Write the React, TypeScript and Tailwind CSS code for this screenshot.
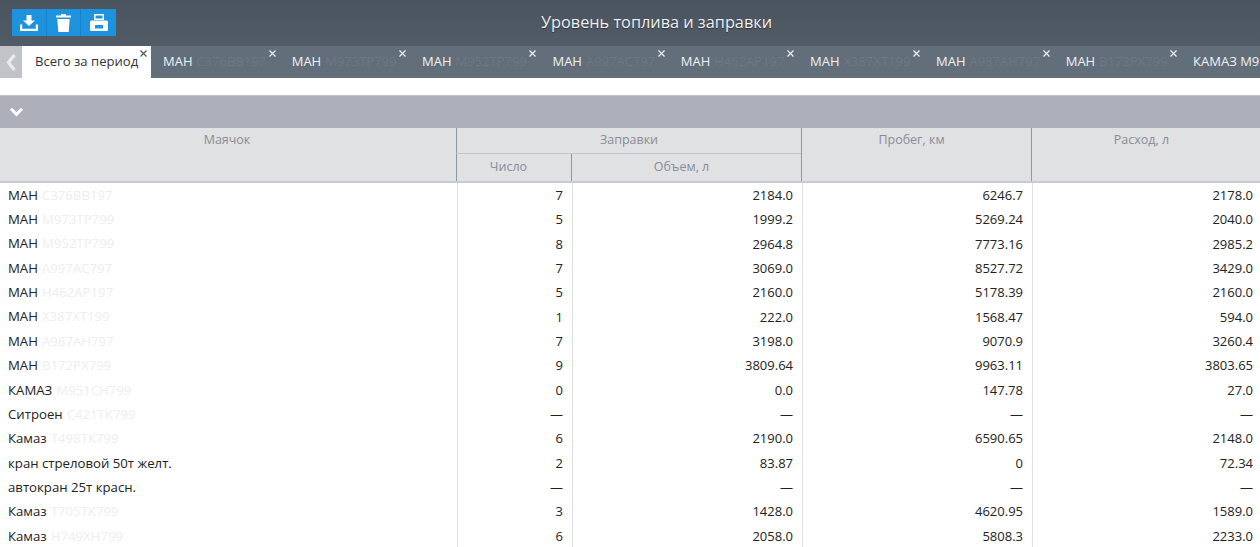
import React from "react";

const tabs: [string, string][] = [
  ["МАН", "С376ВВ197"],
  ["МАН", "М973ТР799"],
  ["МАН", "М952ТР799"],
  ["МАН", "А997АС797"],
  ["МАН", "Н462АР197"],
  ["МАН", "Х387ХТ199"],
  ["МАН", "А987АН797"],
  ["МАН", "В172РХ799"],
];

const rows: [string, string, string, string, string, string][] = [
  ["МАН", "С376ВВ197", "7", "2184.0", "6246.7", "2178.0"],
  ["МАН", "М973ТР799", "5", "1999.2", "5269.24", "2040.0"],
  ["МАН", "М952ТР799", "8", "2964.8", "7773.16", "2985.2"],
  ["МАН", "А997АС797", "7", "3069.0", "8527.72", "3429.0"],
  ["МАН", "Н462АР197", "5", "2160.0", "5178.39", "2160.0"],
  ["МАН", "Х387ХТ199", "1", "222.0", "1568.47", "594.0"],
  ["МАН", "А987АН797", "7", "3198.0", "9070.9", "3260.4"],
  ["МАН", "В172РХ799", "9", "3809.64", "9963.11", "3803.65"],
  ["КАМАЗ", "М951СН799", "0", "0.0", "147.78", "27.0"],
  ["Ситроен", "С421ТК799", "—", "—", "—", "—"],
  ["Камаз", "Т498ТК799", "6", "2190.0", "6590.65", "2148.0"],
  ["кран стреловой 50т желт.", "", "2", "83.87", "0", "72.34"],
  ["автокран 25т красн.", "", "—", "—", "—", "—"],
  ["Камаз", "Т705ТК799", "3", "1428.0", "4620.95", "1589.0"],
  ["Камаз", "Н749ХН799", "6", "2058.0", "5808.3", "2233.0"],
];

function Close() {
  return (
    <svg className="absolute right-[3px] top-[3px]" width="9" height="9" viewBox="0 0 9 9">
      <path d="M1.5 1.5 7.5 7.5M7.5 1.5 1.5 7.5" stroke="currentColor" strokeWidth="1.2" fill="none" />
    </svg>
  );
}

export default function App() {
  return (
    <div className="h-[547px] w-[1260px] overflow-hidden bg-white font-['Open_Sans',sans-serif] text-[13px] text-[#222]">
      <header className="relative flex h-[46px] items-center justify-center bg-gradient-to-b from-[#4a545e] to-[#525c67] pb-[2px] pl-[53px]">
        <div className="absolute left-[12px] top-[9px] flex h-[27px] w-[104px] bg-[#1c93dc]">
          <button className="flex w-[35px] items-center justify-center border-r border-[#1784c8]">
            <svg width="18" height="16" viewBox="0 0 18 16" fill="#fff">
              <path d="M6.5 0h5v5.5h3.5L9 11 3 5.5h3.5z" />
              <path d="M0 9.5h2.2v4.2h13.6V9.5H18V16H0z" />
            </svg>
          </button>
          <button className="flex w-[34px] items-center justify-center border-r border-[#1784c8]">
            <svg width="15" height="18" viewBox="0 0 15 18" fill="#fff">
              <path d="M5 0h5v1.4h5v2H0v-2h5z" />
              <path d="M1.3 5h12.4l-1 13H2.3z" />
            </svg>
          </button>
          <button className="flex flex-1 items-center justify-center">
            <svg width="18" height="17" viewBox="0 0 18 17" fill="#fff">
              <path fillRule="evenodd" d="M4 0h10v6H4zM5.5 1.500v3h7v-3z" />
              <path fillRule="evenodd" d="M1.5 6.500h15A1.500 1.500 0 0 1 18 8v7.500a1.500 1.500 0 0 1-1.500 1.500h-15A1.500 1.500 0 0 1 0 15.500V8a1.500 1.500 0 0 1 1.500-1.500zM5 11v3.500h8V11z" />
            </svg>
          </button>
        </div>
        <h1 className="text-[16.300px] font-medium leading-none text-[#eef0f1] [text-shadow:0_1px_1px_rgba(0,0,0,0.45)]">
          Уровень топлива и заправки
        </h1>
      </header>

      <nav className="flex h-[32px] overflow-hidden bg-[#626e7a]">
        <div className="flex w-[22px] shrink-0 items-center justify-center bg-[#c1c3c8]">
          <svg width="11" height="17" viewBox="0 0 11 17">
            <path d="M8.500 1 2.500 8.500 8.500 16" stroke="#e8e9ea" strokeWidth="3.400" fill="none" />
          </svg>
        </div>
        <div className="relative flex w-[129px] shrink-0 items-center bg-white pl-[13px] text-[13.100px] text-[#333]">
          <span className="whitespace-nowrap">Всего за период</span>
          <span className="text-[#555]"><Close /></span>
        </div>
        {tabs.map(([name, plate]) => (
          <div key={plate} className="relative flex shrink-0 items-center whitespace-nowrap pl-[12px] pr-[13.600px] text-[#f0f2f3]">
            <span>{name}</span>
            <span className="ml-[4px] text-[#6c7884]">{plate}</span>
            <Close />
          </div>
        ))}
        <div className="flex shrink-0 items-center whitespace-nowrap pl-[12px] text-[#f0f2f3]">КАМАЗ М951СН799</div>
      </nav>

      <div className="h-[17px] bg-white" />

      <div className="flex h-[33px] items-center border-t border-[#c3c5cb] bg-[#adb0ba] pl-[9px]">
        <svg width="15" height="10" viewBox="0 0 15 10">
          <path d="M2 1.800 7.500 7.300 13 1.800" stroke="#fff" strokeWidth="3" fill="none" />
        </svg>
      </div>

      <div className="grid h-[55px] grid-cols-[456px_115px_230px_230px_1fr] grid-rows-[26px_1fr] border-b-2 border-[#c9cacd] bg-[#e0e1e3] text-center text-[12.500px] text-[#8a8c97]">
        <div className="row-span-2 pr-[2px] pt-[3px] font-medium">Маячок</div>
        <div className="col-span-2 border-b border-l border-[#8d98a3] border-b-[#c4c6ca] pt-[3px]">Заправки</div>
        <div className="row-span-2 border-l border-[#8d98a3] pr-[10px] pt-[3px]">Пробег, км</div>
        <div className="row-span-2 border-l border-[#8d98a3] pr-[9px] pt-[3px]">Расход, л</div>
        <div className="border-l border-[#8d98a3] pr-[11px] pt-[4px]">Число</div>
        <div className="border-l border-[#8d98a3] pr-[10px] pt-[4px]">Объем, л</div>
      </div>

      <div className="grid auto-rows-[24.360px] grid-cols-[457px_115px_230px_230px_1fr] pt-[0.400px]">
        {rows.map((r) => (
          <React.Fragment key={r[0] + r[1] + r[3]}>
            <div className="flex items-center whitespace-nowrap pl-[8px] text-[13.200px] text-[#222]">
              <span>{r[0]}</span>
              {r[1] && <span className="ml-[4px] text-[#eeeeee]">{r[1]}</span>}
            </div>
            <div className="flex items-center justify-end border-l border-[#e0e0e0] pr-[9px]">{r[2]}</div>
            <div className="flex items-center justify-end border-l border-[#e0e0e0] pr-[9px]">{r[3]}</div>
            <div className="flex items-center justify-end border-l border-[#e0e0e0] pr-[9px]">{r[4]}</div>
            <div className="flex items-center justify-end border-l border-[#e0e0e0] pr-[7px]">{r[5]}</div>
          </React.Fragment>
        ))}
      </div>
    </div>
  );
}
